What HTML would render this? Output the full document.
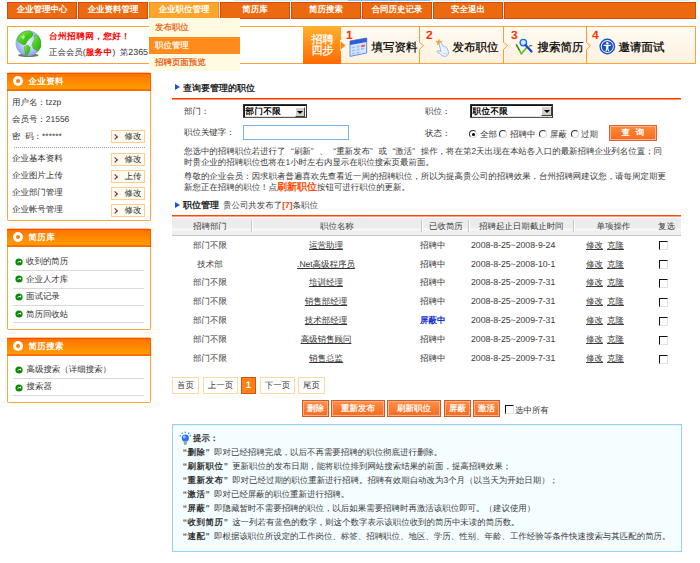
<!DOCTYPE html>
<html><head><meta charset="utf-8">
<style>
*{margin:0;padding:0;box-sizing:border-box}
html,body{width:700px;height:563px;overflow:hidden;background:#fff}
body{position:relative;font-family:"Liberation Sans",sans-serif;font-size:8.46px;text-rendering:geometricPrecision;color:#333;line-height:12px}
.a{position:absolute}
.t{position:absolute;white-space:nowrap;line-height:12px}
.tab{position:absolute;top:2px;height:17px;width:70px;background:#ec6a0f;border:1px solid #d9470b;color:#fff;font-weight:bold;text-align:center;line-height:12.5px;font-size:8.46px}
.tab.on{background:#ffa52c;border-color:#f39022}
.sbox{position:absolute;left:7px;width:144px;border:1px solid #ffa73a;border-top-color:#ffc98a;background:#fff;border-radius:2px}
.shd{height:18px;margin:0 -1px;background:linear-gradient(#ff4a00 0,#ff4a00 1px,#ff7400 1px,#ff9c00 16px,#ff6c00 16px);color:#fff;font-weight:bold;position:relative;border-right:1px solid #ff5a00}
.shd i{position:absolute;left:6px;top:3px;width:10px;height:10px;border-radius:50%;background:#fff}
.shd i:after{content:"";position:absolute;left:3px;top:3px;width:4px;height:4px;border-radius:50%;background:#ff7a10}
.shd b{position:absolute;left:21.5px;top:2px;line-height:12px;font-size:8.46px;letter-spacing:.4px}
.btn{position:absolute;left:103px;width:34px;height:13px;border:1px solid #ffd08a;background:#fffdf2;color:#333}
.btn:before{content:"";position:absolute;left:1px;top:3.8px;width:2.8px;height:2.8px;border-right:1.8px solid #900c0c;border-bottom:1.8px solid #900c0c;transform:rotate(-45deg)}
.btn span{position:absolute;left:12.5px;top:0;line-height:11px}
.gi{position:absolute;left:8px;width:7px;height:7px;border-radius:50%;background:#1a8a1a}
.gi:after{content:"";position:absolute;left:2px;top:2px;width:2px;height:2px;border-top:1px solid #fff;border-right:1px solid #fff;transform:rotate(45deg)}
.sep{position:absolute;left:5px;width:131px;height:1px;background:#d9d9d9}
.pg{position:absolute;top:377px;height:17px;border:1px solid #ffd9a3;background:#fff;color:#3a3a3a;text-align:center;line-height:15px}
.ob{position:absolute;top:400px;height:17px;border:1px solid #cf5a30;background:linear-gradient(#ff8f45,#f36b20);color:#fff;text-align:center;line-height:15px;box-shadow:inset 0 0 0 1px #ffb080;-webkit-text-stroke:.25px #fff}
.cb{position:absolute;width:9px;height:9px;border:1px solid;border-color:#111 #e4e2d8 #e4e2d8 #111;background:#fff}
.lk{text-decoration:underline}
.q{display:inline-block;width:8.46px;text-align:center}
.ql{display:inline-block;width:8.46px;text-align:right}
.qr{display:inline-block;width:8.46px;text-align:left}
.tri{position:absolute;width:0;height:0;border-left:5px solid #1e4fd8;border-top:3.5px solid transparent;border-bottom:3.5px solid transparent}
</style></head><body>

<!-- top light lines -->
<div class="a" style="left:233px;top:0;width:457px;height:1px;background:#d4f0fb"></div>
<div class="a" style="left:348px;top:0;width:82px;height:1px;background:#80c8f2"></div>

<!-- NAV -->
<div class="tab" style="left:7px">企业管理中心</div>
<div class="tab" style="left:78px">企业资料管理</div>
<div class="tab on" style="left:149px">企业职位管理</div>
<div class="tab" style="left:220px">简历库</div>
<div class="tab" style="left:291px">简历搜索</div>
<div class="tab" style="left:362px">合同历史记录</div>
<div class="tab" style="left:433px">安全退出</div>
<div class="tab" style="left:504px;width:192px"></div>

<!-- WELCOME + STEPS BOX -->
<div class="a" style="left:7px;top:26px;width:689px;height:38px;border:1px solid #ffa23a;background:#fff"></div>
<svg class="a" style="left:12px;top:27px" width="34" height="34" viewBox="0 0 34 34">
 <defs><radialGradient id="gl" cx="50%" cy="45%" r="60%"><stop offset="0" stop-color="#eef4ff"/><stop offset=".55" stop-color="#b3cbf7"/><stop offset="1" stop-color="#7b97e6"/></radialGradient>
 <linearGradient id="gr" x1="0" y1="0" x2="1" y2="1"><stop offset="0" stop-color="#9ef05a"/><stop offset=".5" stop-color="#48cc1c"/><stop offset="1" stop-color="#2ea812"/></linearGradient></defs>
 <ellipse cx="16.3" cy="28.2" rx="10.3" ry="1.8" fill="#4d463a" opacity=".75"/>
 <circle cx="16.3" cy="16.3" r="12.7" fill="url(#gl)"/>
 <path d="M5.4 11.5 L7.9 7.2 L12.7 4.4 L18.1 3.9 L21.1 6.6 L19.9 9.7 L16.9 12.1 L15.1 14.5 L13.3 17.5 L10.9 17.5 L7.9 15.7 L5.7 13.9 Z" fill="url(#gr)" stroke="#2f9e14" stroke-width=".5"/>
 <path d="M22.3 8.2 L26 8.9 L28.6 13.3 L28.8 19.9 L26 24.2 L21.7 21.7 L19.9 18.1 L21.1 15.1 L22.9 12.1 Z" fill="url(#gr)" stroke="#2f9e14" stroke-width=".5"/>
 <path d="M12.1 19.9 L15.7 18.1 L18.1 20.5 L17.5 24.2 L15.1 28.4 L13.3 28.4 L13 24.2 Z" fill="url(#gr)" stroke="#2f9e14" stroke-width=".5"/>
 <path d="M9 9.5 L12 8 L13 10.5 L11 12.5 Z" fill="#c8f590" opacity=".8"/>
 <path d="M13.5 11 L16.5 8.5" stroke="#2a7e20" stroke-width=".7" stroke-dasharray="1 1"/>
</svg>
<div class="t" style="left:49px;top:30px;color:#f00;font-weight:bold;font-size:8.6px;letter-spacing:.45px">台州招聘网，您好！</div>
<div class="t" style="left:49px;top:46px;color:#333">正会会员(<b style="color:#f00;letter-spacing:.5px">服务中</b>)<span style="margin-left:4.5px">第</span><span style="font-size:8.9px">2365</span></div>

<!-- steps -->
<div class="a" style="left:341px;top:27px;width:354px;height:36px;background:linear-gradient(#fffbf4,#fff1de)"></div>
<div class="a" style="left:303px;top:26px;width:38px;height:38px;background:linear-gradient(#ffb22f,#ff6a00)"></div>
<svg class="a" style="left:340px;top:40px" width="8" height="11" viewBox="0 0 8 11"><path d="M0 0 L6 5.5 L0 11 Z" fill="#ff8a10" stroke="#fff" stroke-width="1"/></svg>
<div class="t" style="left:311.5px;top:34.5px;color:#fff;font-size:11px;line-height:11px;width:24px;white-space:normal;-webkit-text-stroke:.3px #fff">招聘四步</div>
<!-- separators -->
<svg class="a" style="left:415px;top:26px" width="10" height="38" viewBox="0 0 10 38"><path d="M4.5 0 V16.5 L8.5 19.5 L4.5 23.5 V38" fill="none" stroke="#ff9a30" stroke-width="1"/></svg>
<svg class="a" style="left:499px;top:26px" width="10" height="38" viewBox="0 0 10 38"><path d="M4.5 0 V16.5 L8.5 19.5 L4.5 23.5 V38" fill="none" stroke="#ff9a30" stroke-width="1"/></svg>
<svg class="a" style="left:582px;top:26px" width="10" height="38" viewBox="0 0 10 38"><path d="M4.5 0 V16.5 L8.5 19.5 L4.5 23.5 V38" fill="none" stroke="#ff9a30" stroke-width="1"/></svg>
<!-- numbers -->
<div class="t" style="left:346px;top:29px;color:#ff3300;font-weight:bold;font-size:12px">1</div>
<div class="t" style="left:426px;top:29px;color:#ff3300;font-weight:bold;font-size:12px">2</div>
<div class="t" style="left:511px;top:29px;color:#ff3300;font-weight:bold;font-size:12px">3</div>
<div class="t" style="left:592px;top:29px;color:#ff3300;font-weight:bold;font-size:12px">4</div>
<!-- step labels -->
<div class="t" style="left:371.5px;top:42px;color:#000;font-size:11.5px;line-height:13px;-webkit-text-stroke:.25px #000">填写资料</div>
<div class="t" style="left:452.5px;top:42px;color:#000;font-size:11.5px;line-height:13px;-webkit-text-stroke:.25px #000">发布职位</div>
<div class="t" style="left:537.5px;top:42px;color:#000;font-size:11.5px;line-height:13px;-webkit-text-stroke:.25px #000">搜索简历</div>
<div class="t" style="left:618.5px;top:42px;color:#000;font-size:11.5px;line-height:13px;-webkit-text-stroke:.25px #000">邀请面试</div>
<!-- step icons -->
<svg class="a" style="left:349px;top:37px" width="19" height="21" viewBox="0 0 19 21">
 <path d="M1 4 L17.7 1 L17.7 16 L1 19.4 Z" fill="#d6e6ff" stroke="#3f74dc" stroke-width=".8"/>
 <path d="M1 4 L17.7 1 L17.7 5 L1 8 Z" fill="#2f5fd6"/>
 <g fill="#9dbdf2"><path d="M3 10 L6 9.4 L6 11 L3 11.6 Z"/><path d="M7.5 9.1 L10.5 8.5 L10.5 10.1 L7.5 10.7 Z"/><path d="M3 13 L6 12.4 L6 14 L3 14.6 Z"/><path d="M7.5 12.1 L10.5 11.5 L10.5 13.1 L7.5 13.7 Z"/><path d="M12 11.2 L15 10.6 L15 12.2 L12 12.8 Z"/><path d="M3 16 L6 15.4 L6 17 L3 17.6 Z"/><path d="M7.5 15.1 L10.5 14.5 L10.5 16.1 L7.5 16.7 Z"/></g>
 <path d="M12 8.2 L16 7.4 L16 9.4 L12 10.2 Z" fill="#f05a4a"/>
</svg>
<svg class="a" style="left:434px;top:38px" width="17" height="20" viewBox="0 0 17 20">
 <path d="M5 0.6 L6 3 L8.6 3.2 L6.6 4.9 L7.3 7.5 L5 6.1 L2.7 7.5 L3.4 4.9 L1.4 3.2 L4 3 Z" fill="#ffa21c"/>
 <path d="M5.2 4.6 C6 3.6 7.2 4 7.6 5 L9.4 8.6 C10.5 8.3 12 8.8 13 10 L14.4 13.5 C14.8 15.5 14 17.6 12 18.2 C10.2 18.7 8 18 7 16.8 L6 15.5 C5 15.2 3.6 14.6 3 13.8 C2.6 13.2 3.4 12.6 4.2 12.8 L7 13.4 L5.2 6.5 Z" fill="#eaf3ff" stroke="#8fb4ea" stroke-width=".9"/>
 <path d="M9 15 C10.5 16 12 16 13.3 15" fill="none" stroke="#b7cff2" stroke-width=".8"/>
</svg>
<svg class="a" style="left:514px;top:38px" width="20" height="18" viewBox="0 0 20 18">
 <path d="M2.2 6.5 L7.4 16 L12.8 9.3" fill="none" stroke="#5cc02a" stroke-width="1.6" stroke-linejoin="round"/>
 <path d="M2.2 6.5 L5.5 12" fill="none" stroke="#2a6a20" stroke-width="1"/>
 <circle cx="9.3" cy="4.6" r="3.2" fill="#cfe6ff" stroke="#1a6ee0" stroke-width="1.4"/>
 <path d="M11.5 7 L17.5 13.5" stroke="#1040d8" stroke-width="2.2" stroke-linecap="round"/>
 <path d="M15 8.5 C16 7.5 17 7.6 18.2 7.8" fill="none" stroke="#222" stroke-width="1"/>
</svg>
<svg class="a" style="left:599px;top:38px" width="17" height="17" viewBox="0 0 17 17">
 <circle cx="8.3" cy="8.5" r="7.9" fill="#1a50d0"/>
 <circle cx="8.3" cy="8.5" r="6.5" fill="#fff"/>
 <circle cx="8.3" cy="8.5" r="5.6" fill="#1a4fc8"/>
 <circle cx="8.3" cy="5.2" r="1.2" fill="#fff"/>
 <path d="M4.6 6.8 L12 6.8 L12 7.8 L9.4 8.3 L9.3 10.5 L10.3 13.3 L9 13.3 L8.3 11 L7.6 13.3 L6.3 13.3 L7.2 10.5 L7.2 8.3 L4.6 7.8 Z" fill="#fff"/>
</svg>

<!-- DROPDOWN -->
<div class="a" style="left:149px;top:18px;width:91px;height:53px;background:#fffbe0"></div>
<div class="a" style="left:149px;top:37px;width:91px;height:17px;background:#ff8c1c"></div>
<div class="t" style="left:155px;top:21px;color:#ee5208;-webkit-text-stroke:.2px #ee5208">发布职位</div>
<div class="t" style="left:155px;top:39px;color:#fff;-webkit-text-stroke:.2px #fff">职位管理</div>
<div class="t" style="left:155px;top:56px;color:#ee5208;-webkit-text-stroke:.2px #ee5208">招聘页面预览</div>

<!-- SIDEBAR BOX 1 -->
<div class="sbox" style="top:72px;height:149px">
 <div class="shd"><i></i><b>企业资料</b></div>
 <div class="t" style="left:4px;top:23px">用户名：tzzp</div>
 <div class="t" style="left:4px;top:40px">会员号：21556</div>
 <div class="t" style="left:4px;top:56.5px">密&nbsp;&nbsp;码：******</div>
 <div class="btn" style="top:57px"><span>修改</span></div>
 <div class="a" style="left:6px;top:74px;width:131px;height:1px;border-top:1px dotted #999"></div>
 <div class="t" style="left:4px;top:79px">企业基本资料</div>
 <div class="btn" style="top:80px"><span>修改</span></div>
 <div class="t" style="left:4px;top:96px">企业图片上传</div>
 <div class="btn" style="top:97px"><span>上传</span></div>
 <div class="t" style="left:4px;top:113px">企业部门管理</div>
 <div class="btn" style="top:114px"><span>修改</span></div>
 <div class="t" style="left:4px;top:130px">企业帐号管理</div>
 <div class="btn" style="top:131px"><span>修改</span></div>
</div>

<!-- SIDEBAR BOX 2 -->
<div class="sbox" style="top:228px;height:102px">
 <div class="shd"><i></i><b>简历库</b></div>
 <svg class="a" style="left:7px;top:28.5px" width="8" height="8" viewBox="0 0 8 8"><circle cx="4" cy="4" r="3.6" fill="#078a07"/><path d="M2.3 5.6 C2.5 3.8 3.5 3 5 3 L5 2 L6.3 3.5 L5 5 L5 4 C4 4 3 4.4 2.3 5.6 Z" fill="#fff"/></svg><div class="t" style="left:18px;top:26px">收到的简历</div>
 <div class="sep" style="top:41px"></div>
 <svg class="a" style="left:7px;top:45.5px" width="8" height="8" viewBox="0 0 8 8"><circle cx="4" cy="4" r="3.6" fill="#078a07"/><path d="M2.3 5.6 C2.5 3.8 3.5 3 5 3 L5 2 L6.3 3.5 L5 5 L5 4 C4 4 3 4.4 2.3 5.6 Z" fill="#fff"/></svg><div class="t" style="left:18px;top:44px">企业人才库</div>
 <div class="sep" style="top:59px"></div>
 <svg class="a" style="left:7px;top:63.5px" width="8" height="8" viewBox="0 0 8 8"><circle cx="4" cy="4" r="3.6" fill="#078a07"/><path d="M2.3 5.6 C2.5 3.8 3.5 3 5 3 L5 2 L6.3 3.5 L5 5 L5 4 C4 4 3 4.4 2.3 5.6 Z" fill="#fff"/></svg><div class="t" style="left:18px;top:61px">面试记录</div>
 <div class="sep" style="top:76px"></div>
 <svg class="a" style="left:7px;top:80.5px" width="8" height="8" viewBox="0 0 8 8"><circle cx="4" cy="4" r="3.6" fill="#078a07"/><path d="M2.3 5.6 C2.5 3.8 3.5 3 5 3 L5 2 L6.3 3.5 L5 5 L5 4 C4 4 3 4.4 2.3 5.6 Z" fill="#fff"/></svg><div class="t" style="left:18px;top:79px">简历回收站</div>
 <div class="sep" style="top:93px"></div>
</div>

<!-- SIDEBAR BOX 3 -->
<div class="sbox" style="top:337px;height:66px">
 <div class="shd"><i></i><b>简历搜索</b></div>
 <svg class="a" style="left:7px;top:27.5px" width="8" height="8" viewBox="0 0 8 8"><circle cx="4" cy="4" r="3.6" fill="#078a07"/><path d="M2.3 5.6 C2.5 3.8 3.5 3 5 3 L5 2 L6.3 3.5 L5 5 L5 4 C4 4 3 4.4 2.3 5.6 Z" fill="#fff"/></svg><div class="t" style="left:18.5px;top:24.8px">高级搜索（详细搜索）</div>
 <div class="sep" style="top:40px"></div>
 <svg class="a" style="left:7px;top:45.5px" width="8" height="8" viewBox="0 0 8 8"><circle cx="4" cy="4" r="3.6" fill="#078a07"/><path d="M2.3 5.6 C2.5 3.8 3.5 3 5 3 L5 2 L6.3 3.5 L5 5 L5 4 C4 4 3 4.4 2.3 5.6 Z" fill="#fff"/></svg><div class="t" style="left:18.5px;top:42.2px">搜索器</div>
 <div class="sep" style="top:57px"></div>
</div>

<!-- MAIN: query -->
<div class="tri" style="left:175px;top:84px"></div>
<div class="t" style="left:183px;top:82px;color:#222;font-weight:bold;font-size:9px">查询要管理的职位</div>
<div class="a" style="left:172px;top:98px;width:509px;height:2px;background:linear-gradient(#ff3c00 50%,#ff9670 50%)"></div>

<div class="t" style="left:184px;top:105px">部门：</div>
<div class="a" style="left:243px;top:104px;width:64px;height:14px;border:1px solid #333;border-bottom-color:#555;background:#fff;box-shadow:inset 1px 1px 0 #111,inset 0 -1px 0 #e4e2da"></div>
<div class="t" style="left:245.5px;top:105px;color:#000;font-weight:bold;letter-spacing:.5px">部门不限</div>
<div class="a" style="left:295px;top:107px;width:10px;height:10px;background:#d4d0c8;border:1px solid #fff;border-right-color:#404040;border-bottom-color:#404040"></div>
<div class="a" style="left:297px;top:110.5px;width:0;height:0;border-left:3px solid transparent;border-right:3px solid transparent;border-top:3px solid #000"></div>

<div class="t" style="left:425px;top:105px">职位：</div>
<div class="a" style="left:470px;top:104px;width:83px;height:14px;border:1px solid #333;border-bottom-color:#555;background:#fff;box-shadow:inset 1px 1px 0 #111,inset 0 -1px 0 #e4e2da"></div>
<div class="t" style="left:472.5px;top:105px;color:#000;font-weight:bold;letter-spacing:.5px">职位不限</div>
<div class="a" style="left:541px;top:106px;width:11px;height:10px;background:#d4d0c8;border:1px solid #fff;border-right-color:#404040;border-bottom-color:#404040"></div>
<div class="a" style="left:544px;top:110px;width:0;height:0;border-left:3px solid transparent;border-right:3px solid transparent;border-top:3px solid #000"></div>

<div class="t" style="left:184px;top:126px">职位关键字：</div>
<div class="a" style="left:243px;top:125px;width:106px;height:15px;border:1px solid #7fb2e8;background:#fff"></div>

<div class="t" style="left:425px;top:127px">状态：</div>
<div class="a" style="left:469px;top:130px;width:8px;height:8px;border-radius:50%;border:1.3px solid;border-color:#333 #d8d8d8 #d8d8d8 #333;background:#fff;transform:rotate(0deg)"></div>
<div class="a" style="left:471.5px;top:132.5px;width:3px;height:3px;border-radius:50%;background:#000"></div>
<div class="t" style="left:480px;top:128px">全部</div>
<div class="a" style="left:499px;top:130px;width:8px;height:8px;border-radius:50%;border:1.3px solid;border-color:#333 #d8d8d8 #d8d8d8 #333;background:#fff;transform:rotate(0deg)"></div>
<div class="t" style="left:510px;top:128px">招聘中</div>
<div class="a" style="left:539px;top:130px;width:8px;height:8px;border-radius:50%;border:1.3px solid;border-color:#333 #d8d8d8 #d8d8d8 #333;background:#fff;transform:rotate(0deg)"></div>
<div class="t" style="left:550px;top:128px">屏蔽</div>
<div class="a" style="left:571px;top:130px;width:8px;height:8px;border-radius:50%;border:1.3px solid;border-color:#333 #d8d8d8 #d8d8d8 #333;background:#fff;transform:rotate(0deg)"></div>
<div class="t" style="left:581px;top:128px">过期</div>
<div class="a" style="left:609px;top:125px;width:48px;height:16px;border:1px solid #e0603a;background:linear-gradient(#ff8a3a,#f66a1e);box-shadow:inset 0 0 0 1px #ffb585;color:#fff;font-weight:bold;text-align:center;line-height:13px;letter-spacing:.3px">查&nbsp;&nbsp;询</div>

<div class="t" style="left:184px;top:145px;color:#3a3a3a">您选中的招聘职位若进行了<span class="ql">“</span>刷新<span class="qr">”</span>、<span class="ql">“</span>重新发布<span class="qr">”</span>或<span class="ql">“</span>激活<span class="qr">”</span>操作，将在第2天出现在本站各入口的最新招聘企业列名位置；同</div>
<div class="t" style="left:184px;top:156px;color:#3a3a3a">时贵企业的招聘职位也将在1小时左右内显示在职位搜索页最前面。</div>
<div class="t" style="left:184px;top:170px;color:#3a3a3a">尊敬的企业会员：因求职者普遍喜欢先查看近一周的招聘职位，所以为提高贵公司的招聘效果，台州招聘网建议您，请每周定期更</div>
<div class="t" style="left:184px;top:181px;color:#3a3a3a">新您正在招聘的职位！点<b style="color:#ff4a00;font-size:10px">刷新职位</b>按钮可进行职位的更新。</div>

<!-- MAIN: manage -->
<div class="tri" style="left:175px;top:202px"></div>
<div class="t" style="left:183px;top:199px;color:#222;font-weight:bold;font-size:9px">职位管理</div>
<div class="t" style="left:223px;top:199px;color:#3a3a3a">贵公司共发布了<b style="color:#ff3a00">[7]</b>条职位</div>
<div class="a" style="left:172px;top:215px;width:509px;height:2px;background:linear-gradient(#ff4800 50%,#ffa080 50%)"></div>

<div class="a" style="left:172px;top:217px;width:509px;height:19px;background:linear-gradient(#fcfcfc 0,#fcfcfc 1px,#ececec 1px,#ededed 11px,#f9f9f9 12px,#f9f9f9 13px,#efefef 14px,#efefef 17px);border-bottom:1px solid #c8c8c8"></div>
<div class="a" style="left:251px;top:220px;width:2px;height:12px;border-left:1px solid #c8c8c8;border-right:1px solid #fff"></div>
<div class="a" style="left:421px;top:220px;width:2px;height:12px;border-left:1px solid #c8c8c8;border-right:1px solid #fff"></div>
<div class="a" style="left:468px;top:220px;width:2px;height:12px;border-left:1px solid #c8c8c8;border-right:1px solid #fff"></div>
<div class="a" style="left:573px;top:220px;width:2px;height:12px;border-left:1px solid #c8c8c8;border-right:1px solid #fff"></div>
<div class="t" style="left:193px;top:220px;color:#3a3a3a">招聘部门</div>
<div class="t" style="left:320px;top:220px;color:#3a3a3a">职位名称</div>
<div class="t" style="left:429px;top:220px;color:#3a3a3a">已收简历</div>
<div class="t" style="left:479px;top:220px;color:#3a3a3a">招聘起止日期截止时间</div>
<div class="t" style="left:596.5px;top:220px;color:#3a3a3a">单项操作</div>
<div class="t" style="left:658px;top:220px;color:#3a3a3a">复选</div>

<!--ROWS--><div class="t" style="left:170px;width:80px;text-align:center;top:238.6px;color:#3a3a3a">部门不限</div>
<div class="t lk" style="left:251px;width:150px;text-align:center;top:238.6px;color:#333">运营助理</div>
<div class="t" style="left:420px;top:238.6px;color:#333">招聘中</div>
<div class="t" style="left:471px;top:238.6px;color:#3a3a3a;font-size:8.7px">2008-8-25~2008-9-24</div>
<div class="t lk" style="left:586px;top:238.6px;color:#3a3a3a">修改</div><div class="t lk" style="left:607px;top:238.6px;color:#3a3a3a">克隆</div>
<div class="cb" style="left:659px;top:241px"></div>
<div class="t" style="left:170px;width:80px;text-align:center;top:257.52px;color:#3a3a3a">技术部</div>
<div class="t lk" style="left:251px;width:150px;text-align:center;top:257.52px;color:#333">.Net高级程序员</div>
<div class="t" style="left:420px;top:257.52px;color:#333">招聘中</div>
<div class="t" style="left:471px;top:257.52px;color:#3a3a3a;font-size:8.7px">2008-8-25~2008-10-1</div>
<div class="t lk" style="left:586px;top:257.52px;color:#3a3a3a">修改</div><div class="t lk" style="left:607px;top:257.52px;color:#3a3a3a">克隆</div>
<div class="cb" style="left:659px;top:260px"></div>
<div class="t" style="left:170px;width:80px;text-align:center;top:276.44px;color:#3a3a3a">部门不限</div>
<div class="t lk" style="left:251px;width:150px;text-align:center;top:276.44px;color:#333">培训经理</div>
<div class="t" style="left:420px;top:276.44px;color:#333">招聘中</div>
<div class="t" style="left:471px;top:276.44px;color:#3a3a3a;font-size:8.7px">2008-8-25~2009-7-31</div>
<div class="t lk" style="left:586px;top:276.44px;color:#3a3a3a">修改</div><div class="t lk" style="left:607px;top:276.44px;color:#3a3a3a">克隆</div>
<div class="cb" style="left:659px;top:279px"></div>
<div class="t" style="left:170px;width:80px;text-align:center;top:295.36px;color:#3a3a3a">部门不限</div>
<div class="t lk" style="left:251px;width:150px;text-align:center;top:295.36px;color:#333">销售部经理</div>
<div class="t" style="left:420px;top:295.36px;color:#333">招聘中</div>
<div class="t" style="left:471px;top:295.36px;color:#3a3a3a;font-size:8.7px">2008-8-25~2009-7-31</div>
<div class="t lk" style="left:586px;top:295.36px;color:#3a3a3a">修改</div><div class="t lk" style="left:607px;top:295.36px;color:#3a3a3a">克隆</div>
<div class="cb" style="left:659px;top:298px"></div>
<div class="t" style="left:170px;width:80px;text-align:center;top:314.28px;color:#3a3a3a">部门不限</div>
<div class="t lk" style="left:251px;width:150px;text-align:center;top:314.28px;color:#333">技术部经理</div>
<div class="t" style="left:420px;top:314.28px;color:#1030d0;font-weight:bold">屏蔽中</div>
<div class="t" style="left:471px;top:314.28px;color:#3a3a3a;font-size:8.7px">2008-8-25~2009-7-31</div>
<div class="t lk" style="left:586px;top:314.28px;color:#3a3a3a">修改</div><div class="t lk" style="left:607px;top:314.28px;color:#3a3a3a">克隆</div>
<div class="cb" style="left:659px;top:317px"></div>
<div class="t" style="left:170px;width:80px;text-align:center;top:333.2px;color:#3a3a3a">部门不限</div>
<div class="t lk" style="left:251px;width:150px;text-align:center;top:333.2px;color:#333">高级销售顾问</div>
<div class="t" style="left:420px;top:333.2px;color:#333">招聘中</div>
<div class="t" style="left:471px;top:333.2px;color:#3a3a3a;font-size:8.7px">2008-8-25~2009-7-31</div>
<div class="t lk" style="left:586px;top:333.2px;color:#3a3a3a">修改</div><div class="t lk" style="left:607px;top:333.2px;color:#3a3a3a">克隆</div>
<div class="cb" style="left:659px;top:336px"></div>
<div class="t" style="left:170px;width:80px;text-align:center;top:352.12px;color:#3a3a3a">部门不限</div>
<div class="t lk" style="left:251px;width:150px;text-align:center;top:352.12px;color:#333">销售总监</div>
<div class="t" style="left:420px;top:352.12px;color:#333">招聘中</div>
<div class="t" style="left:471px;top:352.12px;color:#3a3a3a;font-size:8.7px">2008-8-25~2009-7-31</div>
<div class="t lk" style="left:586px;top:352.12px;color:#3a3a3a">修改</div><div class="t lk" style="left:607px;top:352.12px;color:#3a3a3a">克隆</div>
<div class="cb" style="left:659px;top:355px"></div><!--/ROWS-->

<!-- pagination -->
<div class="pg" style="left:172px;width:27px">首页</div>
<div class="pg" style="left:203px;width:35px">上一页</div>
<div class="pg" style="left:241px;width:15px;background:#ff7f12;border-color:#d5501a;color:#fff;font-weight:bold;font-size:9.5px">1</div>
<div class="pg" style="left:260px;width:35px">下一页</div>
<div class="pg" style="left:298px;width:27px">尾页</div>

<div class="ob" style="left:302px;width:27px">删除</div>
<div class="ob" style="left:331px;width:54px">重新发布</div>
<div class="ob" style="left:387px;width:54px">刷新职位</div>
<div class="ob" style="left:444px;width:27px">屏蔽</div>
<div class="ob" style="left:473px;width:27px">激活</div>
<div class="cb" style="left:505px;top:405px"></div>
<div class="t" style="left:515px;top:404px;color:#333">选中所有</div>

<!-- tips -->
<div class="a" style="left:172px;top:424px;width:510px;height:128px;border:1px solid #9ccdf6;background:#f4fdff;box-shadow:inset 0 1px 0 #e6f2fa"></div>
<svg class="a" style="left:178px;top:430px" width="15" height="16" viewBox="0 0 15 16">
 <g fill="#3a8cf5"><circle cx="2.3" cy="5.8" r=".8"/><circle cx="4.2" cy="3.2" r=".8"/><circle cx="7.3" cy="2.3" r=".8"/><circle cx="10.7" cy="3.4" r=".8"/><circle cx="12.3" cy="5.7" r=".8"/></g>
 <circle cx="7.3" cy="8" r="3.6" fill="#2d6ff0"/>
 <circle cx="6.3" cy="7" r="1.4" fill="#9cc6ff"/>
 <rect x="5.6" y="10.8" width="3.4" height="2.6" fill="#7da2f0"/>
 <rect x="6" y="13.4" width="2.6" height="1.2" fill="#8a7a60"/>
</svg>
<div class="t" style="left:193px;top:432px;color:#333;font-weight:bold">提示：</div>
<div class="t" style="left:179px;top:446px;color:#3a3a3a"><b style="color:#333;letter-spacing:.6px"><span class="ql">“</span>删除<span class="qr">”</span></b>即对已经招聘完成，以后不再需要招聘的职位彻底进行删除。</div>
<div class="t" style="left:179px;top:460px;color:#3a3a3a"><b style="color:#333;letter-spacing:.6px"><span class="ql">“</span>刷新职位<span class="qr">”</span></b>更新职位的发布日期，能将职位排到网站搜索结果的前面，提高招聘效果；</div>
<div class="t" style="left:179px;top:474px;color:#3a3a3a"><b style="color:#333;letter-spacing:.6px"><span class="ql">“</span>重新发布<span class="qr">”</span></b>即对已经过期的职位重新进行招聘。招聘有效期自动改为3个月（以当天为开始日期）；</div>
<div class="t" style="left:179px;top:488px;color:#3a3a3a"><b style="color:#333;letter-spacing:.6px"><span class="ql">“</span>激活<span class="qr">”</span></b>即对已经屏蔽的职位重新进行招聘。</div>
<div class="t" style="left:179px;top:502px;color:#3a3a3a"><b style="color:#333;letter-spacing:.6px"><span class="ql">“</span>屏蔽<span class="qr">”</span></b>即隐藏暂时不需要招聘的职位，以后如果需要招聘时再激活该职位即可。（建议使用）</div>
<div class="t" style="left:179px;top:516px;color:#3a3a3a"><b style="color:#333;letter-spacing:.6px"><span class="ql">“</span>收到简历<span class="qr">”</span></b>这一列若有蓝色的数字，则这个数字表示该职位收到的简历中未读的简历数。</div>
<div class="t" style="left:179px;top:530px;color:#3a3a3a"><b style="color:#333;letter-spacing:.6px"><span class="ql">“</span>速配<span class="qr">”</span></b>即根据该职位所设定的工作岗位、标签、招聘职位、地区、学历、性别、年龄、工作经验等条件快速搜索与其匹配的简历。</div>

</body></html>
